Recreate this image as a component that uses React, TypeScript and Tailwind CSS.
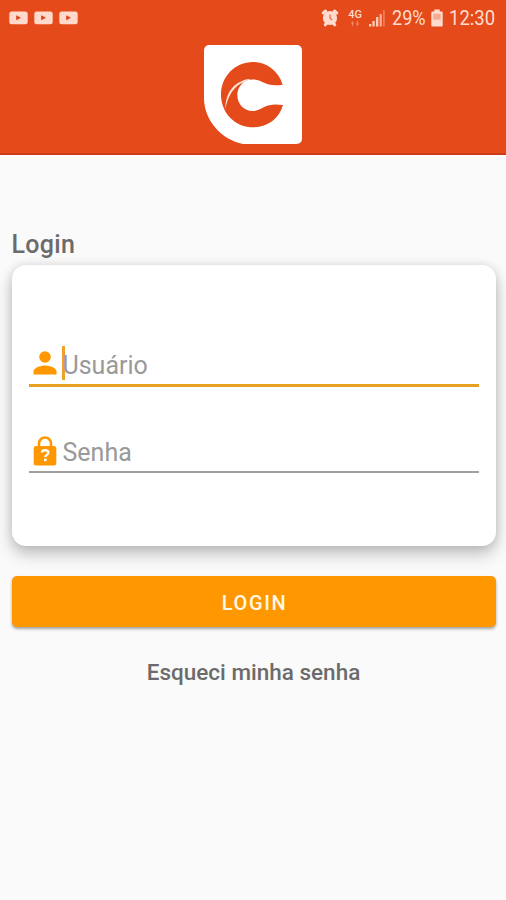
import { useState } from "react";

function VideoIcon() {
  return (
    <svg viewBox="0 0 19 14" className="h-[14px] w-[19px]">
      <rect x="0.3" y="0.5" width="18.4" height="12.8" rx="2.5" fill="#ffd9cc" />
      <path d="M7.2 4.2v5l4.8-2.5z" fill="#d9421a" />
    </svg>
  );
}

function AlarmIcon() {
  return (
    <svg viewBox="0 0 18 18" className="h-[18px] w-[18px]">
      <g stroke="#ffdccf" strokeWidth="3" strokeLinecap="round">
        <path d="M2.3 4 4.6 2M15.7 4 13.4 2M4.3 15.8l1.2-1.5M13.7 15.8l-1.2-1.5" />
      </g>
      <circle cx="9" cy="9" r="7.1" fill="#ffdccf" />
      <path d="M9 5.5V9l2.2 2" fill="none" stroke="#e8643c" strokeWidth="1.2" />
    </svg>
  );
}

function SignalIcon() {
  return (
    <svg viewBox="0 0 18 18" className="h-[18px] w-[18px]">
      <g fill="#ffc9b6">
        <rect x="0" y="15" width="2.4" height="2.5" />
        <rect x="3.4" y="12" width="2.4" height="5.5" />
        <rect x="7" y="8" width="2.4" height="9.5" />
        <rect x="10.6" y="5" width="2.2" height="12.5" opacity="0.8" />
        <rect x="14" y="1" width="1.8" height="16.5" opacity="0.4" />
      </g>
    </svg>
  );
}

function BatteryIcon() {
  return (
    <svg viewBox="0 0 12 18" className="h-[18px] w-[12px]">
      <path d="M3.3 0.5h5.4v2h1.8q1.2 0 1.2 1.2v12.6q0 1.2-1.2 1.2h-9Q0.3 17.5 0.3 16.3V3.7Q0.3 2.5 1.5 2.5h1.8z" fill="#ffdccf" />
      <rect x="2.3" y="4.7" width="7.4" height="6" fill="#f6ab8e" />
    </svg>
  );
}

function Logo() {
  return (
    <svg viewBox="28 30 294 297" className="h-[99px] w-[98px]">
      <path
        d="M45 30H305Q322 30 322 47V310Q322 327 305 327H145C80 315 28 255 28 190V47Q28 30 45 30Z"
        fill="#fff"
      />
      <path
        d="M264 149C252 108 216 81 176 81C120 81 79 125 79 179C79 234 122 277 176 277C219 277 254 250 265 210C242 207 224 207 207 217C194 225 184 228 174 228C148 228 128 207 128 180C128 164 136 149 149 140C164 131 185 132 201 140C222 150 238 153 264 149Z"
        fill="#e54a1a"
      />
      <path
        d="M92 224C91 187 107 151 142 138C150 134 158 132 168 132L149 141C119 151 98 184 92 224Z"
        fill="#ffe3d6"
      />
    </svg>
  );
}

function UserIcon() {
  return (
    <svg viewBox="0 0 24 24" className="h-6 w-6" fill="#ff9800">
      <circle cx="12" cy="6" r="5.8" />
      <path d="M0.5 23.5v-3C0.5 16.5 8 14.5 12 14.5s11.5 2 11.5 6v3z" />
    </svg>
  );
}

function LockIcon() {
  return (
    <svg viewBox="0 0 24 30" className="h-[30px] w-6">
      <path d="M6 11V7.5a6 6 0 0 1 12 0V11" fill="none" stroke="#ff9800" strokeWidth="2.6" />
      <rect x="0.7" y="10" width="22.6" height="19.5" rx="2.5" fill="#ff9800" />
      <path
        d="M9 16.6q0-2.4 3.1-2.4 3.2 0 3.2 2.3 0 1.4-1.6 2.4-1.4.9-1.4 2.1"
        fill="none"
        stroke="#fff"
        strokeWidth="2.4"
      />
      <rect x="11" y="22.6" width="2.6" height="2.6" fill="#fff" />
    </svg>
  );
}

function StatusBar() {
  return (
    <div className="flex h-9 items-center justify-between pl-[8.5px] pr-[10px] text-[#ffdccf]">
      <div className="flex gap-[6.3px] pb-px">
        <VideoIcon />
        <VideoIcon />
        <VideoIcon />
      </div>
      <div className="flex items-center">
        <AlarmIcon />
        <div className="ml-[8px] flex w-4 flex-col items-center pb-[2px]">
          <span className="text-[11px] leading-[12px] font-medium">4G</span>
          <svg viewBox="0 0 12 6" className="h-[5px] w-3" fill="#f08a66">
            <path d="M1 3 3 0l2 3H3.7v3H2.3V3zM7 3l2 3 2-3H9.7V0H8.3v3z" />
          </svg>
        </div>
        <div className="ml-[6px]">
          <SignalIcon />
        </div>
        <span className="ml-[5px] w-[35px] origin-left scale-x-[0.86] text-[21px] leading-none">
          29%
        </span>
        <div className="ml-1">
          <BatteryIcon />
        </div>
        <span className="ml-[6px] w-[47px] origin-left scale-x-[0.88] text-[21px] leading-none">
          12:30
        </span>
      </div>
    </div>
  );
}

export default function App() {
  const [username, setUsername] = useState("");
  const [password, setPassword] = useState("");

  return (
    <div className="h-[900px] w-[506px] overflow-hidden bg-[#fafafa] font-['Roboto',sans-serif]">
      <header className="h-[155px] border-b-2 border-[#cf3a16] bg-[#e54a1a]">
        <StatusBar />
        <div className="flex justify-center pt-[9px]">
          <Logo />
        </div>
      </header>

      <main className="flex flex-col pr-[10.5px] pl-[11.5px] pt-[75px]">
        <h1 className="text-[25px] leading-[30px] font-medium tracking-[0.3px] text-[#6b6b6b]">
          Login
        </h1>

        <form className="mt-[5px] h-[281px] rounded-[14px] bg-white px-[17px] pt-[77px] shadow-[0_8px_16px_rgba(0,0,0,0.24),0_0_10px_rgba(0,0,0,0.1)]">
          <label className="flex h-[45px] items-center border-b-3 border-[#e8a020] pl-[4px]">
            <UserIcon />
            <span className="ml-[5px] h-[34px] w-[3px] bg-[#eda128]" />
            <input
              value={username}
              onChange={(e) => setUsername(e.target.value)}
              placeholder="Usuário"
              className="-ml-[2px] h-9 min-w-0 flex-1 bg-transparent pt-[5px] text-[25px] outline-none placeholder:text-[#999999]"
            />
          </label>
          <label className="mt-[43px] flex h-[43px] items-center border-b-2 border-[#a0a0a0] pl-[4px]">
            <LockIcon />
            <input
              type="password"
              value={password}
              onChange={(e) => setPassword(e.target.value)}
              placeholder="Senha"
              className="ml-[6px] h-9 min-w-0 flex-1 bg-transparent pt-[5px] text-[25px] outline-none placeholder:text-[#999999]"
            />
          </label>
        </form>

        <button className="mt-[30px] h-[51px] rounded-[5px] bg-[#ff9800] pt-[2px] pl-[2px] text-[20px] font-medium tracking-[1.6px] text-[#fff8e8] shadow-[0_2px_3px_rgba(0,0,0,0.35)]">
          LOGIN
        </button>

        <a className="mt-[31px] text-center text-[22.5px] leading-[28px] font-medium text-[#6b6b6b]">
          Esqueci minha senha
        </a>
      </main>
    </div>
  );
}
